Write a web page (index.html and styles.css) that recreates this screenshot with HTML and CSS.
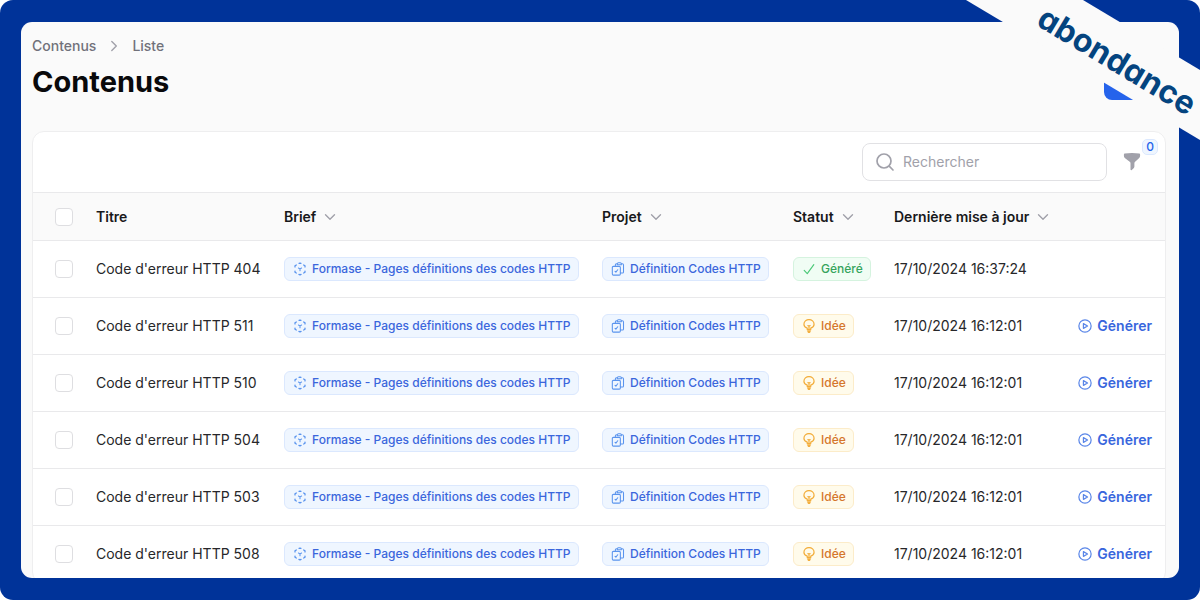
FILE: index.html
```html
<!DOCTYPE html>
<html lang="fr">
<head>
<meta charset="utf-8">
<title>Contenus</title>
<link rel="stylesheet" href="styles.css">
</head>
<body>
<svg class="sprite" aria-hidden="true">
  <symbol id="i-chev" viewBox="0 0 12 12"><path d="M1.500 3.800 6 8.300l4.500-4.500" fill="none" stroke="currentColor" stroke-width="1.400" stroke-linecap="round" stroke-linejoin="round"/></symbol>
  <symbol id="i-brief" viewBox="0 0 16 16" fill="none" stroke="currentColor" stroke-linecap="round" stroke-linejoin="round"><path stroke-width="1.500" d="M7 1.600 8 1.200l1 .4M12.200 3.400l1.500.9v1.300M13.700 10.400v1.300l-1.500.9M9.200 14.200 8 14.800l-1.200-.6M3.800 12.600l-1.500-.9v-1.300M2.300 5.600V4.300l1.500-.9"/><path stroke-width="1.200" d="M6.200 6.900 8 7.900l1.800-1M8 7.900v2.200"/></symbol>
  <symbol id="i-project" viewBox="0 0 16 16" fill="none" stroke="currentColor" stroke-width="1.200" stroke-linecap="round" stroke-linejoin="round"><rect x="1.500" y="5" width="9.200" height="10" rx="1.200"/><path d="M5 5V3.200C5 2.500 5.500 2 6.200 2H7M12 2h1c.8 0 1.300.5 1.300 1.300v8c0 .8-.5 1.200-1.200 1.200h-2.400M7.200 3.200V2c0-.7.5-1.200 1.200-1.200h2.200c.7 0 1.200.5 1.200 1.200v1.200zM4.600 10.600l1 1L7.700 8.900"/></symbol>
  <symbol id="i-check" viewBox="0 0 16 16"><path d="M2.500 9.500 6 13.300 13.500 3" fill="none" stroke="currentColor" stroke-width="1.300" stroke-linecap="round" stroke-linejoin="round"/></symbol>
  <symbol id="i-bulb" viewBox="0 0 16 16" fill="none" stroke="currentColor" stroke-width="1.400" stroke-linecap="round" stroke-linejoin="round"><path d="M6 11.600v-1.200C3.800 9.600 2.200 8 2.200 5.900a5.800 5.300 0 0 1 11.600 0c0 2.100-1.600 3.700-3.800 4.500v1.200M8 12V8M6.800 7.500 8 8l1.200-.5M6 12.200h4M6.400 13.800h3.200M7.200 15.200h1.600"/></symbol>
  <symbol id="i-play" viewBox="0 0 16 16" fill="none" stroke="currentColor" stroke-width="1.400" stroke-linejoin="round"><circle cx="8" cy="8" r="7"/><path d="M6.200 5.300v5.400L10.900 8z"/></symbol>
</svg>
<div class="frame">
  <main class="panel">
    <header class="page-head">
      <div>
        <nav class="crumbs" aria-label="Fil d'Ariane">
          <a href="#">Contenus</a>
          <svg class="chev crumb-chev" aria-hidden="true"><use href="#i-chev"/></svg>
          <a href="#">Liste</a>
        </nav>
        <h1 class="title">Contenus</h1>
      </div>
      <button class="create" type="button" aria-label="Nouveau"></button>
    </header>
    <section class="card">
      <div class="toolbar">
        <label class="search">
          <svg class="search-icon" viewBox="0 0 20 20" aria-hidden="true"><path d="M14.200 14.200 18 18M16 9A7 7 0 1 1 2 9a7 7 0 0 1 14 0z" fill="none" stroke="currentColor" stroke-width="1.700" stroke-linecap="round"/></svg>
          <input class="search-input" type="search" placeholder="Rechercher" aria-label="Rechercher">
        </label>
        <button class="filter" type="button" aria-label="Filtrer">
          <svg class="filter-icon" viewBox="0 0 18 20" aria-hidden="true"><path d="M9 1c2.600 0 5.200.2 7.300.5.500.1.800.5.800 1v1.300c0 .8-.3 1.500-.9 2.100l-4.300 4.200c-.3.300-.5.700-.5 1.200v3.200c0 .8-.4 1.500-1 1.900l-1.700 1.600c-.5.400-1.200.1-1.200-.6v-6.100c0-.5-.2-.9-.5-1.200L1.800 5.900C1.200 5.300.9 4.600.9 3.800V2.500c0-.5.300-.9.800-1C3.900 1.200 6.400 1 9 1z" fill="currentColor"/></svg>
          <span class="count">0</span>
        </button>
      </div>
      <table class="table">
        <colgroup><col class="c-check"><col class="c-title"><col class="c-brief"><col class="c-project"><col class="c-status"><col class="c-date"><col></colgroup>
        <thead>
          <tr>
            <th class="check"><input class="box" type="checkbox" aria-label="Tout sélectionner"></th>
            <th>Titre</th>
            <th><button class="sort" type="button">Brief <svg class="chev" aria-hidden="true"><use href="#i-chev"/></svg></button></th>
            <th><button class="sort" type="button">Projet <svg class="chev" aria-hidden="true"><use href="#i-chev"/></svg></button></th>
            <th><button class="sort" type="button">Statut <svg class="chev" aria-hidden="true"><use href="#i-chev"/></svg></button></th>
            <th><button class="sort" type="button">Dernière mise à jour <svg class="chev" aria-hidden="true"><use href="#i-chev"/></svg></button></th>
            <th></th>
          </tr>
        </thead>
        <tbody>
          <tr>
            <td class="check"><input class="box" type="checkbox" aria-label="Code d'erreur HTTP 404"></td>
            <td>Code d'erreur HTTP 404</td>
            <td><span class="badge"><svg class="icon"><use href="#i-brief"/></svg>Formase - Pages définitions des codes HTTP</span></td>
            <td><span class="badge"><svg class="icon"><use href="#i-project"/></svg>Définition Codes HTTP</span></td>
            <td><span class="badge done"><svg class="icon"><use href="#i-check"/></svg>Généré</span></td>
            <td>17/10/2024 16:37:24</td>
            <td></td>
          </tr>
          <tr>
            <td class="check"><input class="box" type="checkbox" aria-label="Code d'erreur HTTP 511"></td>
            <td>Code d'erreur HTTP 511</td>
            <td><span class="badge"><svg class="icon"><use href="#i-brief"/></svg>Formase - Pages définitions des codes HTTP</span></td>
            <td><span class="badge"><svg class="icon"><use href="#i-project"/></svg>Définition Codes HTTP</span></td>
            <td><span class="badge idea"><svg class="icon"><use href="#i-bulb"/></svg>Idée</span></td>
            <td>17/10/2024 16:12:01</td>
            <td class="action"><button class="generate" type="button"><svg class="play"><use href="#i-play"/></svg>Générer</button></td>
          </tr>
          <tr>
            <td class="check"><input class="box" type="checkbox" aria-label="Code d'erreur HTTP 510"></td>
            <td>Code d'erreur HTTP 510</td>
            <td><span class="badge"><svg class="icon"><use href="#i-brief"/></svg>Formase - Pages définitions des codes HTTP</span></td>
            <td><span class="badge"><svg class="icon"><use href="#i-project"/></svg>Définition Codes HTTP</span></td>
            <td><span class="badge idea"><svg class="icon"><use href="#i-bulb"/></svg>Idée</span></td>
            <td>17/10/2024 16:12:01</td>
            <td class="action"><button class="generate" type="button"><svg class="play"><use href="#i-play"/></svg>Générer</button></td>
          </tr>
          <tr>
            <td class="check"><input class="box" type="checkbox" aria-label="Code d'erreur HTTP 504"></td>
            <td>Code d'erreur HTTP 504</td>
            <td><span class="badge"><svg class="icon"><use href="#i-brief"/></svg>Formase - Pages définitions des codes HTTP</span></td>
            <td><span class="badge"><svg class="icon"><use href="#i-project"/></svg>Définition Codes HTTP</span></td>
            <td><span class="badge idea"><svg class="icon"><use href="#i-bulb"/></svg>Idée</span></td>
            <td>17/10/2024 16:12:01</td>
            <td class="action"><button class="generate" type="button"><svg class="play"><use href="#i-play"/></svg>Générer</button></td>
          </tr>
          <tr>
            <td class="check"><input class="box" type="checkbox" aria-label="Code d'erreur HTTP 503"></td>
            <td>Code d'erreur HTTP 503</td>
            <td><span class="badge"><svg class="icon"><use href="#i-brief"/></svg>Formase - Pages définitions des codes HTTP</span></td>
            <td><span class="badge"><svg class="icon"><use href="#i-project"/></svg>Définition Codes HTTP</span></td>
            <td><span class="badge idea"><svg class="icon"><use href="#i-bulb"/></svg>Idée</span></td>
            <td>17/10/2024 16:12:01</td>
            <td class="action"><button class="generate" type="button"><svg class="play"><use href="#i-play"/></svg>Générer</button></td>
          </tr>
          <tr>
            <td class="check"><input class="box" type="checkbox" aria-label="Code d'erreur HTTP 508"></td>
            <td>Code d'erreur HTTP 508</td>
            <td><span class="badge"><svg class="icon"><use href="#i-brief"/></svg>Formase - Pages définitions des codes HTTP</span></td>
            <td><span class="badge"><svg class="icon"><use href="#i-project"/></svg>Définition Codes HTTP</span></td>
            <td><span class="badge idea"><svg class="icon"><use href="#i-bulb"/></svg>Idée</span></td>
            <td>17/10/2024 16:12:01</td>
            <td class="action"><button class="generate" type="button"><svg class="play"><use href="#i-play"/></svg>Générer</button></td>
          </tr>
        </tbody>
      </table>
    </section>
  </main>
  <div class="ribbon"><span class="brand">abondance</span></div>
</div>
</body>
</html>
```
FILE: styles.css
```css
* { box-sizing: border-box; }
body { margin: 0; background: #fff; font-family: Inter, "Liberation Sans", sans-serif; font-size: 14px; line-height: 20px; color: #27272a; }
button { font: inherit; color: inherit; background: none; border: 0; padding: 0; }
.sprite { display: none; }

.frame { position: relative; display: flex; height: 100vh; padding: 22px 21px; background: #039; border-radius: 13px; overflow: hidden; }
.panel { flex: 1; min-width: 0; padding: 14px 13px 0 11px; background: #fafafa; border-radius: 11px; overflow: hidden; }

.page-head { display: flex; justify-content: space-between; align-items: flex-end; margin-bottom: 31px; }
.crumbs { display: flex; align-items: center; gap: 12px; font-weight: 500; color: #71717a; }
.crumbs a { color: inherit; text-decoration: none; }
.title { margin: 8px 0 0; font-size: 29px; line-height: 36px; font-weight: 700; color: #09090b; }
.create { width: 62px; height: 34px; background: #2563eb; border-radius: 8px; }
.chev { width: 12px; height: 12px; color: #a1a1aa; flex: none; }
.crumb-chev { transform: rotate(-90deg); }

.card { background: #fff; border: 1px solid #eeeeef; border-radius: 12px; overflow: hidden; }
.toolbar { display: flex; justify-content: flex-end; align-items: center; gap: 12px; height: 60px; padding: 0 18px; }
.search { display: flex; align-items: center; gap: 8px; width: 245px; height: 38px; padding: 0 12px; border: 1px solid #e1e1e4; border-radius: 8px; }
.search-icon { width: 20px; height: 20px; color: #a1a1aa; flex: none; }
.search-input { flex: 1; min-width: 0; padding: 0; border: 0; outline: 0; background: none; font: inherit; }
.search-input::placeholder { color: #a1a1aa; }
.filter { position: relative; display: flex; align-items: center; width: 28px; height: 34px; padding-left: 4px; color: #a1a1aa; }
.filter-icon { width: 18px; height: 20px; }
.count { position: absolute; top: -6px; right: -11px; width: 16px; height: 16px; font-size: 12px; line-height: 14px; font-weight: 500; text-align: center; color: #2563eb; background: #eff6ff; border: 1px solid #dbe8fe; border-radius: 5px; }

.table { width: 100%; border-collapse: collapse; table-layout: fixed; }
.c-check { width: 51px; }
.c-title { width: 188px; }
.c-brief { width: 318px; }
.c-project { width: 191px; }
.c-status { width: 101px; }
.c-date { width: 170px; }
th, td { padding: 0 12px; border-top: 1px solid #e9e9eb; text-align: left; white-space: nowrap; }
th { height: 48px; background: #fafafa; font-weight: 600; color: #18181b; }
td { height: 57px; }
.check { padding: 0 10px 0 22px; }
.box { appearance: none; display: block; width: 18px; height: 18px; margin: 0; background: #fff; border: 1px solid #dedee1; border-radius: 4px; }
.sort { display: flex; align-items: center; gap: 8px; }

.badge { display: inline-flex; align-items: center; gap: 4px; height: 24px; padding: 0 7px; font-size: 12px; font-weight: 500; color: #3b66dc; background: #eff6ff; border: 1px solid #dbe8fe; border-radius: 6px; vertical-align: middle; }
.icon { width: 16px; height: 16px; padding: 1px; flex: none; color: #5a94ee; }
.play { width: 14px; height: 14px; flex: none; color: #5a86e8; }
.done { color: #35a45c; background: #f0fdf4; border-color: #d5f3df; }
.done .icon { color: #4ac877; }
.idea { color: #d5762b; background: #fffbeb; border-color: #fcecc9; }
.idea .icon { color: #f3ae3d; }
.action { padding: 0 13px 0 0; }
.generate { display: flex; align-items: center; gap: 5px; margin-left: auto; font-weight: 600; color: #3866dd; }

.ribbon { position: absolute; top: 0; right: 0; width: 234px; height: 140px; background: #fafafa; clip-path: polygon(0 0, 50% 0, 100% 50%, 100% 100%); }
.brand { position: absolute; top: 41px; left: 62px; font-size: 32px; line-height: 40px; font-weight: 700; font-feature-settings: "cv11"; color: #04447f; transform: rotate(31deg); }
```
